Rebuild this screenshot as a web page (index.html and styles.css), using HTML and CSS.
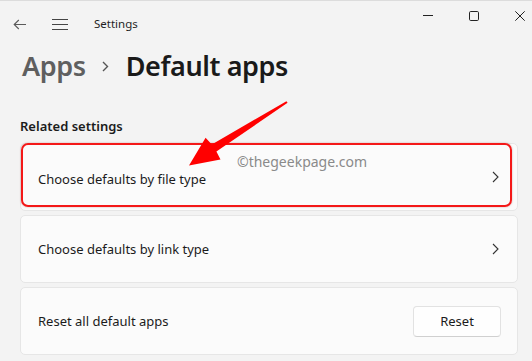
FILE: index.html
```html
<!DOCTYPE html>
<html lang="en">
<head>
  <meta charset="UTF-8">
  <meta name="viewport" content="width=device-width, initial-scale=1.0">
  <title>Settings - Default apps</title>
  <link rel="stylesheet" href="styles.css">
</head>
<body>
  <div class="window">
    <div class="titlebar">
      <span class="nav-btn back">
        <svg width="14" height="11" viewBox="0 0 14 11"><path d="M13 5.5H1.2M5.8 1L1.2 5.5L5.8 10" fill="none" stroke="#5a5a5a" stroke-width="1.1"/></svg>
      </span>
      <span class="nav-btn menu">
        <svg width="16" height="11" viewBox="0 0 16 11"><path d="M0 0.5H16M0 5.5H16M0 10.5H16" fill="none" stroke="#444" stroke-width="1"/></svg>
      </span>
      <span class="app-name">Settings</span>
      <div class="window-controls">
        <svg width="10" height="10" viewBox="0 0 10 10"><path d="M0 4.5H10" stroke="#222" stroke-width="1"/></svg>
        <svg width="10" height="10" viewBox="0 0 10 10"><rect x="0.5" y="0.5" width="9" height="9" rx="1.2" fill="none" stroke="#222" stroke-width="1"/></svg>
        <svg width="10" height="10" viewBox="0 0 10 10"><path d="M0.3 0.3L9.7 9.7M9.7 0.3L0.3 9.7" stroke="#222" stroke-width="1"/></svg>
      </div>
    </div>

    <h1 class="breadcrumb">
      <span class="crumb-parent">Apps</span>
      <svg class="crumb-sep" width="7" height="11" viewBox="0 0 7 11"><path d="M1 1L5.5 5.5L1 10" fill="none" stroke="#555" stroke-width="1.4"/></svg>
      <span class="crumb-current">Default apps</span>
    </h1>

    <div class="section">
      <h2 class="section-title">Related settings</h2>
      <div class="card highlighted">
        <span class="card-label">Choose defaults by file type</span>
        <svg class="chevron" width="7" height="12" viewBox="0 0 7 12"><path d="M1 1L6 6L1 11" fill="none" stroke="#333" stroke-width="1.1"/></svg>
        <span class="watermark">©thegeekpage.com</span>
        <span class="annotation-box"></span>
      </div>
      <div class="card">
        <span class="card-label">Choose defaults by link type</span>
        <svg class="chevron" width="7" height="12" viewBox="0 0 7 12"><path d="M1 1L6 6L1 11" fill="none" stroke="#333" stroke-width="1.1"/></svg>
      </div>
      <div class="card">
        <span class="card-label">Reset all default apps</span>
        <button class="reset-btn">Reset</button>
      </div>
    </div>

    <svg class="annotation-arrow" width="532" height="361" viewBox="0 0 532 361">
      <polygon points="287.6,101.8 216.4,150.6 220.5,158.5 189,164.5 205.6,136.8 211.8,143.4 286.4,100.2" fill="#f00"/>
    </svg>
  </div>
</body>
</html>
```

FILE: styles.css
```css
html, body {
  margin: 0;
  padding: 0;
}
body {
  background: #f3f3f3;
  font-family: 'Noto Sans', 'Open Sans', Arial, sans-serif;
  color: #1b1b1b;
}
.window {
  position: relative;
  width: 532px;
  height: 361px;
  overflow: hidden;
  border-top: 1px solid #dcdcdc;
  box-sizing: border-box;
}
.titlebar {
  display: flex;
  align-items: flex-start;
  height: 40px;
}
.nav-btn {
  display: flex;
  margin-top: 18px;
}
.back {
  margin-left: 13px;
}
.menu {
  margin-left: 25px;
  margin-top: 18px;
}
.app-name {
  margin-left: 26px;
  margin-top: 15px;
  font-size: 11.5px;
  color: #1f1f1f;
}
.window-controls {
  margin-left: auto;
  margin-top: 10px;
  margin-right: 7px;
  display: flex;
  gap: 36px;
}
.breadcrumb {
  display: flex;
  align-items: center;
  margin: 4px 0 0 22px;
  height: 40px;
  font-size: 27px;
  font-weight: 600;
  letter-spacing: -0.4px;
}
.crumb-parent {
  color: #5f5f5f;
}
.crumb-sep {
  margin: 2px 17px 0 16px;
}
.crumb-current {
  color: #1a1a1a;
}
.section {
  margin: 0 14px 0 20px;
  padding-top: 32px;
}
.section-title {
  margin: 0 0 8px 0;
  font-size: 13px;
  font-weight: 600;
  color: #1b1b1b;
  height: 18px;
  line-height: 18px;
}
.card {
  position: relative;
  display: flex;
  align-items: center;
  height: 66px;
  padding: 0 17px;
  margin-bottom: 4px;
  background: #fbfbfb;
  border: 1px solid #e6e6e6;
  border-radius: 5px;
}
.card-label {
  font-size: 13px;
  color: #1b1b1b;
}
.chevron {
  margin-left: auto;
  margin-right: 1px;
}
.reset-btn {
  margin-left: auto;
  margin-right: -1px;
  width: 88px;
  height: 31px;
  background: #fefefe;
  border: 1px solid #e2e2e2;
  border-bottom-color: #d0d0d0;
  border-radius: 4px;
  font-family: inherit;
  font-size: 13px;
  color: #1b1b1b;
}
.highlighted .card-label {
  padding-top: 3px;
}
.watermark {
  position: absolute;
  left: 216px;
  top: 8px;
  font-size: 14px;
  color: #8a8a8a;
}
.annotation-box {
  position: absolute;
  left: 0;
  top: -1px;
  right: 5px;
  bottom: 3px;
  border: 2px solid #f41818;
  border-radius: 7px;
  box-shadow: 0 0 2px rgba(120, 0, 0, 0.35);
}
.annotation-arrow {
  position: absolute;
  left: 0;
  top: 0;
  pointer-events: none;
}
```
